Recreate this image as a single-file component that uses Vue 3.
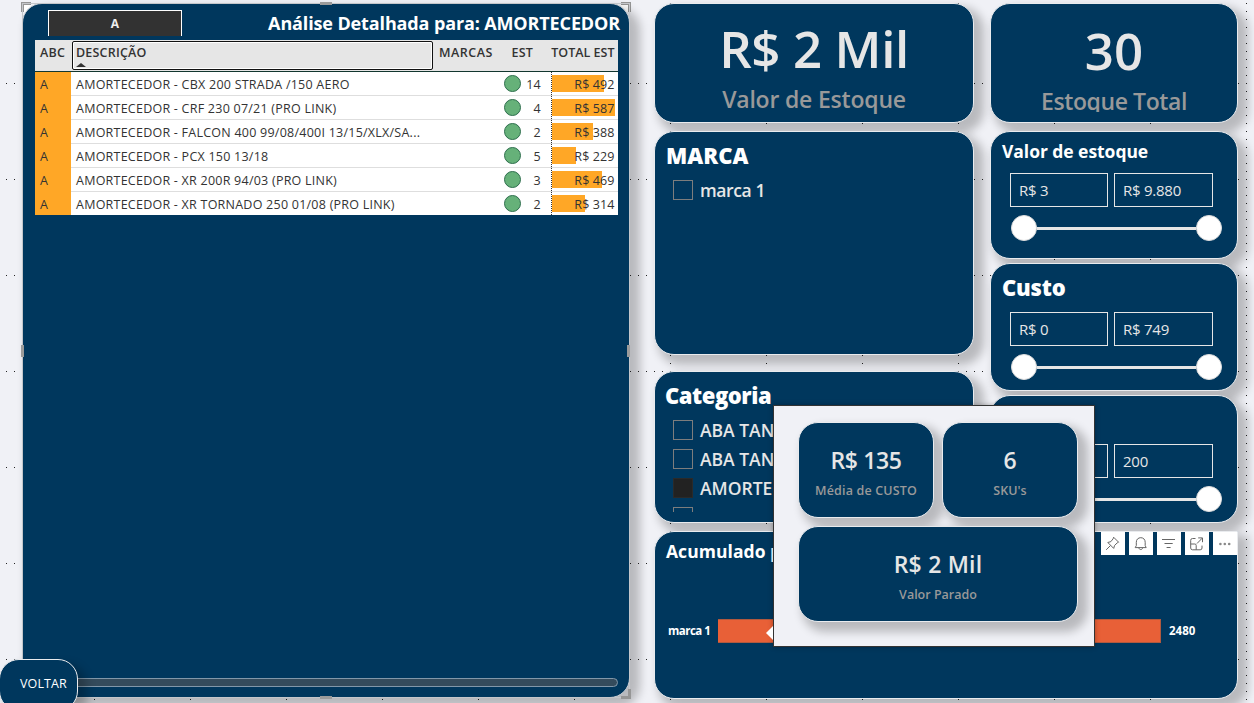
<script setup>
const rows = [
  { name: 'AMORTECEDOR - CBX 200 STRADA /150 AERO', est: 14, total: 492, bar: 52 },
  { name: 'AMORTECEDOR - CRF 230 07/21 (PRO LINK)', est: 4, total: 587, bar: 63 },
  { name: 'AMORTECEDOR - FALCON 400 99/08/400I 13/15/XLX/SA...', est: 2, total: 388, bar: 41 },
  { name: 'AMORTECEDOR - PCX 150 13/18', est: 5, total: 229, bar: 24 },
  { name: 'AMORTECEDOR - XR 200R 94/03 (PRO LINK)', est: 3, total: 469, bar: 50 },
  { name: 'AMORTECEDOR - XR TORNADO 250 01/08 (PRO LINK)', est: 2, total: 314, bar: 33 },
]
const ranges = [
  { title: 'Valor de estoque', min: 'R$ 3', max: 'R$ 9.880', kind: 'small' },
  { title: 'Custo', min: 'R$ 0', max: 'R$ 749', kind: 'large' },
  { title: 'Estoque', min: '0', max: '200', kind: 'large' },
]
const categories = [
  { name: 'ABA TANQUE', on: false },
  { name: 'ABA TANQUE', on: false },
  { name: 'AMORTECEDOR', on: true },
  { name: '', on: false },
]
</script>

<template>
  <div class="page">
    <svg class="dots" width="1254" height="703">
      <defs>
        <pattern id="dotRows" width="8" height="96" patternUnits="userSpaceOnUse">
          <rect x="6" y="83" width="1" height="1" fill="#222" />
        </pattern>
        <pattern id="dotCols" width="96" height="8" patternUnits="userSpaceOnUse">
          <rect x="94" y="3" width="1" height="1" fill="#222" />
        </pattern>
      </defs>
      <rect width="1254" height="703" fill="url(#dotRows)" />
      <rect width="1254" height="703" fill="url(#dotCols)" />
    </svg>

    <section class="main-wrap">
      <i class="handle tl"></i><i class="handle tr"></i><i class="handle br"></i>
      <div class="card main">
        <header class="main-head">
          <div class="abc-btn">A</div>
          <h1><span>Análise Detalhada para: AMORTECEDOR</span></h1>
        </header>
        <div class="table">
          <div class="row thead">
            <div class="c-abc">ABC</div>
            <div class="c-desc focus"><span>DESCRIÇÃO</span><i class="sort"></i></div>
            <div class="c-marca">MARCAS</div>
            <div class="c-est">EST</div>
            <div class="c-total">TOTAL EST</div>
          </div>
          <div v-for="r in rows" :key="r.name" class="row body">
            <div class="c-abc">A</div>
            <div class="c-desc">{{ r.name }}</div>
            <div class="c-marca"></div>
            <div class="c-est"><i class="dot"></i><span>{{ r.est }}</span></div>
            <div class="c-total"><i class="bar" :style="{ width: r.bar + 'px' }"></i><span>R$ {{ r.total }}</span></div>
          </div>
        </div>
        <div class="scroll"></div>
      </div>
      <i class="mid top"></i><i class="mid bottom"></i><i class="side left"></i><i class="side right"></i>
      <div class="voltar"><span>VOLTAR</span></div>
    </section>

    <section class="board">
      <div class="cols">
        <div class="col-mid">
          <div class="card kpi">
            <div class="kpi-value k1">R$ 2 Mil</div>
            <div class="kpi-label l1">Valor de Estoque</div>
          </div>
          <div class="card marca">
            <h2 class="t-marca">MARCA</h2>
            <div class="check"><i class="box"></i><span class="t-item">marca 1</span></div>
          </div>
          <div class="card categoria">
            <h2 class="t-cat">Categoria</h2>
            <div class="list">
              <div v-for="(c, i) in categories" :key="i" class="check">
                <i class="box" :class="{ on: c.on }"></i><span>{{ c.name }}</span>
              </div>
            </div>
          </div>
        </div>
        <div class="col-right">
          <div class="card kpi">
            <div class="kpi-value k2">30</div>
            <div class="kpi-label l2">Estoque Total</div>
          </div>
          <div v-for="r in ranges" :key="r.title" class="card range" :class="r.kind">
            <h2>{{ r.title }}</h2>
            <div class="inputs">
              <div class="field">{{ r.min }}</div>
              <div class="field second">{{ r.max }}</div>
            </div>
            <div class="slider"><i class="knob"></i><i class="line"></i><i class="knob"></i></div>
          </div>
        </div>
      </div>

      <div class="card chart">
        <div class="chart-head">
          <h2>Acumulado por Marca</h2>
          <div class="tools">
            <div class="tool">
              <svg width="24" height="23" viewBox="0 0 24 23"><path d="M12.6 5.2 L17.6 10.2 L16.2 10.9 L13.6 13.4 L12.7 16.4 L6.8 10.5 L9.9 9.6 L12.1 6.8 Z M9.5 13.5 L5.2 17.8" /></svg>
            </div>
            <div class="tool">
              <svg width="24" height="23" viewBox="0 0 24 23"><path d="M6.2 15.6 H17.2 L16.2 13.6 V10.3 C16.2 7.4 14.3 5.7 11.8 5.7 C9.2 5.7 7.3 7.4 7.3 10.3 V13.6 Z M9.9 15.8 C10 18.1 13.5 18.1 13.6 15.8" /></svg>
            </div>
            <div class="tool">
              <svg width="24" height="23" viewBox="0 0 24 23"><path d="M5 7.5 H18 M7.5 11.5 H15.7 M9.6 15.5 H13.6" /></svg>
            </div>
            <div class="tool">
              <svg width="24" height="23" viewBox="0 0 24 23"><path d="M10.5 6.5 H7.5 Q5.7 6.5 5.7 8.3 V16 Q5.7 17.8 7.5 17.8 H15.2 Q17 17.8 17 16 V13.6 M5.7 12 H9.8 Q11.2 12 11.2 13.4 V17.8 M12 11.5 L17.2 6.2 M13.2 5.9 H17.5 V10.2" /></svg>
            </div>
            <div class="tool">
              <svg width="24" height="23" viewBox="0 0 24 23"><g class="more"><circle cx="7.4" cy="12" r="1.3" /><circle cx="11.8" cy="12" r="1.3" /><circle cx="16.2" cy="12" r="1.3" /></g></svg>
            </div>
          </div>
        </div>
        <div class="bar-row">
          <span class="bar-label">marca 1</span>
          <i class="bar-fill"></i>
          <span class="bar-value">2480</span>
        </div>
      </div>
    </section>

    <div class="tip">
      <div class="tip-row">
        <div class="card mini">
          <div class="mini-v v1">R$ 135</div>
          <div class="mini-l m1">Média de CUSTO</div>
        </div>
        <div class="card mini">
          <div class="mini-v">6</div>
          <div class="mini-l m2">SKU's</div>
        </div>
      </div>
      <div class="card mini wide">
        <div class="mini-v v3">R$ 2 Mil</div>
        <div class="mini-l m3">Valor Parado</div>
      </div>
    </div>
    <i class="tip-arrow"></i>
  </div>
</template>

<style>
html, body { margin: 0; overflow: hidden; }
</style>

<style scoped>
* { box-sizing: border-box; }
h1, h2 { margin: 0; }
i { display: block; font-style: normal; }
.page {
  position: relative; width: 1254px; height: 703px; overflow: hidden;
  background: #f0f1f6; display: flex; padding: 3px 0 0 22px;
  font-family: "Open Sans", "Noto Sans", sans-serif; color: #fff; white-space: nowrap;
}
.dots { position: absolute; left: 0; top: 0; }
.card {
  position: relative; background: #00375d; border: 1px solid #e9ebee; border-radius: 20px;
  box-shadow: 7px 7px 10px 3px rgba(0, 0, 0, .23);
}

.main-wrap { position: relative; width: 608px; height: 695px; flex: none; }
.main-wrap::before { content: ""; position: absolute; left: 0; top: 0; right: 0; bottom: 0; border: 1px solid #c4c6ca; z-index: 1; pointer-events: none; }
.main { height: 695px; padding: 6px 11px 0 12px; border-color: #c9ced4; }
.main-head { display: flex; justify-content: space-between; height: 30px; }
.abc-btn {
  width: 134px; height: 26px; margin-left: 13px; background: #323232; border: 1px solid #fff; border-bottom: 0;
  text-align: center; font-size: 12px; font-weight: 700; line-height: 26px; color: #eee;
}
h1 { font-size: 18px; font-weight: 700; line-height: 26px; letter-spacing: -.13px; margin-right: -2px; }
.handle { position: absolute; width: 10px; height: 10px; border: 0 solid #969696; background: #fff; z-index: 0; }
.tl { left: -1px; top: -1px; border-width: 3px 0 0 3px; }
.tr { right: -1px; top: -1px; border-width: 3px 3px 0 0; }
.br { right: -1px; bottom: -1px; border-width: 0 3px 3px 0; background: #ccc; z-index: 2; clip-path: polygon(100% 0, 100% 100%, 0 100%, 0 70%, 70% 70%, 70% 0); }
.mid, .side { position: absolute; background: #9b9b9b; z-index: 2; }
.mid { width: 12px; height: 3px; left: 298px; }
.top { top: -1px; }
.bottom { bottom: -1px; }
.side { width: 3px; height: 12px; top: 342px; }
.left { left: -1px; }
.right { right: 0; }

.table { width: 583px; height: 175px; background: #fff; color: #333; font-size: 12.5px; letter-spacing: .26px; overflow: hidden; }
.row { display: grid; grid-template-columns: 36px 363px 64px 53px 67px; }
.thead { height: 32px; background: #e6e6e6; border-bottom: 1px solid #12372f; font-weight: 600; line-height: 25px; }
.body { height: 24px; line-height: 25px; border-bottom: 1px solid #dedede; }
.c-abc { padding-left: 5px; }
.body .c-abc { background: #ffa726; }
.c-desc { padding-left: 5px; letter-spacing: .24px; }
.c-marca { padding-left: 5px; letter-spacing: .5px; }
.focus { border: 1px solid #111; border-radius: 2px; margin: 1px 1px 1px 1px; padding-left: 3px; line-height: 21px; box-shadow: inset 0 0 0 1px #fff; position: relative; }
.focus span { letter-spacing: .2px; }
.sort { position: absolute; left: 3px; top: 21px; border: 5px solid transparent; border-top: 0; border-bottom: 4px solid #333; }
.c-est { display: flex; justify-content: flex-end; align-items: center; padding-right: 10px; position: relative; }
.thead .c-est { padding-right: 18px; align-items: flex-start; letter-spacing: .2px; }
.thead .c-total { letter-spacing: 0; }
.dot { position: absolute; left: 6px; top: 3px; width: 17px; height: 17px; border-radius: 50%; background: #66b179; border: 1px solid #2f6f4e; }
.c-total { position: relative; text-align: right; padding-right: 3.5px; }
.body .c-total { border-left: 1px dotted #333; letter-spacing: .1px; }
.bar { position: absolute; left: 0; top: 3px; height: 17px; background: #ffa726; }
.c-total span { position: relative; }
.scroll { position: absolute; left: 12px; right: 11px; bottom: 10px; height: 9px; border: 1px solid #8197a9; border-radius: 5px; background: #344b5c; }
.voltar {
  position: absolute; left: -23px; top: 656px; width: 79px; height: 52px; z-index: 3; background: #00375d;
  border: 1px solid #e9ebee; border-radius: 20px; font-size: 12.5px; letter-spacing: .1px; line-height: 48px; padding-left: 20px;
  box-shadow: 7px 7px 10px 2px rgba(0, 0, 0, .23);
}

.board { position: relative; width: 584px; margin-left: 24px; flex: none; }
.cols { display: flex; gap: 16px; }
.col-mid { width: 320px; }
.col-right { width: 248px; display: flex; flex-direction: column; }
.kpi { height: 120px; text-align: center; margin-bottom: 8px; }
.kpi-value { font-weight: 600; color: #e6e6e6; font-size: 51px; line-height: 60px; height: 60px; }
.k1 { margin-top: 14px; letter-spacing: -.4px; }
.k2 { margin-top: 16px; }
.kpi-label { font-weight: 600; color: #999; font-size: 23px; line-height: 30px; overflow: hidden; }
.l1 { margin-top: 6px; letter-spacing: -.2px; }
.l2 { margin-top: 6px; height: 26px; letter-spacing: -.4px; }
.marca { height: 224px; margin-bottom: 16px; padding: 8px 11px; }
.marca h2, .categoria h2 { font-size: 22px; font-weight: 800; line-height: 30px; height: 30px; letter-spacing: -.45px; }
.marca h2 { letter-spacing: 0; }
.check { display: flex; align-items: center; height: 29px; font-size: 17.5px; font-weight: 600; color: #e6e6e6; padding-left: 7px; gap: 7px; }
.marca .check { margin-top: 5px; letter-spacing: -.4px; }
.box { width: 20px; height: 20px; border: 1px solid #7d7d7d; flex: none; }
.box.on { background: #222; border-color: #2a2a2a; }
.categoria { height: 152px; padding: 8px 10px; }
.categoria .check { padding-left: 8px; }
.list { height: 97px; margin-top: 5px; overflow: hidden; }

.range { height: 128px; margin-bottom: 4px; padding: 0 10px; }
.range h2 { font-size: 17.5px; line-height: 30px; padding: 4px 0 0 1px; height: 41px; letter-spacing: -.05px; }
.range.large h2 { font-size: 22px; font-weight: 800; padding-top: 8px; height: 48px; letter-spacing: -.2px; }
.inputs { display: flex; gap: 6px; padding-left: 9px; }
.field { width: 98px; height: 34px; border: 1px solid #e6e6e6; padding-left: 8px; line-height: 33px; font-size: 15px; letter-spacing: -.25px; color: #e6e6e6; }
.second { width: 99px; }
.slider { display: flex; align-items: center; width: 211px; margin: 8px 0 0 10px; }
.knob { width: 26px; height: 26px; border-radius: 50%; background: #fff; border: 1px solid #ddd; flex: none; }
.line { height: 3px; flex: 1; background: #e6e6e6; }

.chart { height: 168px; margin-top: 4px; border-top-right-radius: 0; }
.chart-head { display: flex; justify-content: space-between; }
.chart h2 { font-size: 17.5px; line-height: 30px; padding: 4px 0 1px 11px; letter-spacing: .05px; }
.tools { display: flex; gap: 4px; }
.tool { width: 24px; height: 23px; background: #fff; }
.tool svg { display: block; fill: none; stroke: #666; stroke-width: 1; }
.tool .more { fill: #888; stroke: none; }
.bar-row { display: flex; align-items: center; height: 24px; margin-top: 52px; padding-left: 13px; font-size: 11.5px; font-weight: 700; letter-spacing: -.5px; }
.bar-label { width: 50px; padding-bottom: 2px; }
.bar-fill { width: 443px; height: 24px; background: #e86037; border: 1px solid #b0593f; border-width: 1px 1px 1px 0; }
.bar-value { margin-left: 8px; padding-bottom: 2px; letter-spacing: 0; }

.tip {
  position: absolute; left: 773px; top: 405px; width: 322px; height: 242px; z-index: 4; background: #f0f1f6;
  border: 1px solid #333; padding: 16px 16px 0 24px; box-shadow: 0 0 5px rgba(0, 0, 0, .3);
}
.tip-row { display: flex; gap: 8px; }
.mini { width: 136px; height: 96px; text-align: center; padding-top: 22px; flex: none; }
.wide { width: 280px; margin-top: 8px; }
.mini-v { font-size: 23px; font-weight: 600; line-height: 30px; color: #e6e6e6; letter-spacing: -.4px; }
.v3 { letter-spacing: .2px; }
.mini-l { font-size: 12.5px; font-weight: 600; line-height: 20px; margin-top: 6px; color: #999; }
.m1 { letter-spacing: .15px; }
.tip-arrow { position: absolute; left: 766px; top: 626px; border: 7px solid transparent; border-left: 0; border-right-color: #fff; z-index: 5; }
</style>
